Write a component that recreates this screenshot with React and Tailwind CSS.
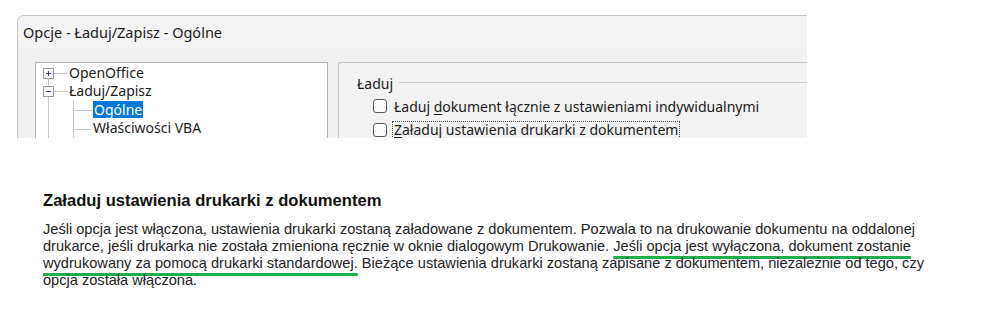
import React from 'react'

const TreeLines = () => (
    <svg className="absolute left-0 top-0" width="80" height="80" viewBox="0 0 80 80">
        {/* root-level vertical connector */}
        <line x1="12.5" y1="15" x2="12.5" y2="80" stroke="#c8c8c8" strokeWidth="1" />
        {/* children connector */}
        <line x1="37.5" y1="37" x2="37.5" y2="80" stroke="#c8c8c8" strokeWidth="1" />
        <line x1="18" y1="10.5" x2="32" y2="10.5" stroke="#c8c8c8" strokeWidth="1" />
        <line x1="18" y1="28.5" x2="32" y2="28.5" stroke="#c8c8c8" strokeWidth="1" />
        <line x1="37.5" y1="47.5" x2="56" y2="47.5" stroke="#c8c8c8" strokeWidth="1" />
        <line x1="37.5" y1="66.5" x2="56" y2="66.5" stroke="#c8c8c8" strokeWidth="1" />
        {/* plus box */}
        <rect x="7.5" y="5.5" width="10" height="10" fill="#fff" stroke="#9a9a9a" strokeWidth="1" />
        <line x1="10" y1="10.5" x2="15" y2="10.5" stroke="#3a3a8a" strokeWidth="1" />
        <line x1="12.5" y1="8" x2="12.5" y2="13" stroke="#3a3a8a" strokeWidth="1" />
        {/* minus box */}
        <rect x="7.5" y="23.5" width="10" height="10" fill="#fff" stroke="#9a9a9a" strokeWidth="1" />
        <line x1="10" y1="28.5" x2="15" y2="28.5" stroke="#3a3a8a" strokeWidth="1" />
    </svg>
)

const Checkbox = () => (
    <span className="inline-block h-[14px] w-[14px] shrink-0 rounded-[3px] border border-[#5a5a5a] bg-[#fbfbfb]" />
)

const App = () => {
    return (
        <div className="h-[315px] w-[988px] overflow-hidden bg-white pt-[15px] text-[#1b1b1b]">
            {/* dialog */}
            <div className="ml-[17px] flex h-[123px] w-[790px] flex-col overflow-hidden rounded-tl-[7px] border-l border-t border-[#c6c6c6] bg-[#f0f0f0] font-['Segoe_UI','Noto_Sans',sans-serif]">
                <div className="flex h-[33px] shrink-0 items-center bg-[#f3f3f3] pl-[5px] text-[14.5px] leading-none">
                    Opcje - Ładuj/Zapisz - Ogólne
                </div>
                <div className="flex flex-1 gap-[10px] pl-[17px] pt-[13px]">
                    <div className="relative w-[293px] shrink-0 border border-b-0 border-[#b4b4b4] bg-white text-[14px]">
                        <TreeLines />
                        <div className="flex h-[18.5px] items-center pl-[33px]">OpenOffice</div>
                        <div className="flex h-[18.5px] items-center pl-[33px]">Ładuj/Zapisz</div>
                        <div className="flex h-[18.5px] items-center pl-[57px]">
                            <span className="flex h-[17px] items-center bg-[#0078d7] px-[1px] text-white">Ogólne</span>
                        </div>
                        <div className="flex h-[18.5px] items-center pl-[57px]">Właściwości VBA</div>
                    </div>
                    <div className="flex-1 rounded-tl-[3px] border-l border-t border-[#c4c4c4] bg-[#f2f2f2] pl-[18px] pt-[12px] text-[14px]">
                        <div className="flex items-center gap-[6px]">
                            <span className="leading-[18px]">Ładuj</span>
                            <span className="mt-[-3px] h-px flex-1 bg-[#cdcdcd]" />
                        </div>
                        <div className="mt-[4px] flex flex-col gap-[6px] pl-[16px]">
                            <div className="flex h-[18px] items-center gap-[7px]">
                                <Checkbox />
                                <span>
                                    Ładuj <span className="underline underline-offset-2">d</span>okument łącznie z ustawieniami indywidualnymi
                                </span>
                            </div>
                            <div className="flex h-[18px] items-center gap-[5px]">
                                <Checkbox />
                                <span className="border border-dotted border-[#444] px-[1px] leading-[16px]">
                                    <span className="underline underline-offset-2">Z</span>aładuj ustawienia drukarki z dokumentem
                                </span>
                            </div>
                        </div>
                    </div>
                </div>
            </div>

            {/* help text */}
            <div className="ml-[43px] mt-[54px] font-['Liberation_Sans',Arial,sans-serif] text-[#222]">
                <h2 className="text-[16.6px] font-bold leading-[18px] text-[#111]">Załaduj ustawienia drukarki z dokumentem</h2>
                <p className="mt-[11px] whitespace-nowrap text-[14.6px] leading-[17px]">
                    Jeśli opcja jest włączona, ustawienia drukarki zostaną załadowane z dokumentem. Pozwala to na drukowanie dokumentu na oddalonej
                    <br />
                    drukarce, jeśli drukarka nie została zmieniona ręcznie w oknie dialogowym Drukowanie.{' '}
                    <span className="underline decoration-[#1fae4b] decoration-[2.5px] underline-offset-[5px]">
                        Jeśli opcja jest wyłączona, dokument zostanie
                    </span>
                    <br />
                    <span className="underline decoration-[#1fae4b] decoration-[2.5px] underline-offset-[5px]">
                        wydrukowany za pomocą drukarki standardowej.
                    </span>{' '}
                    Bieżące ustawienia drukarki zostaną zapisane z dokumentem, niezależnie od tego, czy
                    <br />
                    opcja została włączona.
                </p>
            </div>
        </div>
    )
}

export default App
